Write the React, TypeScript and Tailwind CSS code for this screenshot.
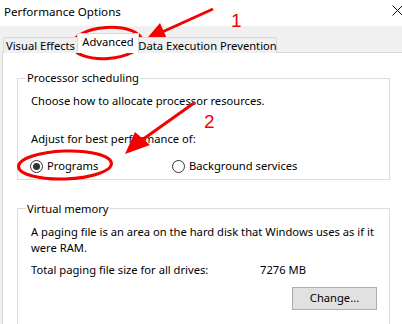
import React from 'react';

// Windows "Performance Options" dialog with red annotations

const Radio = ({ checked, label }: { checked?: boolean; label: string }) => (
  <label className="flex items-center gap-[4px]">
    <span className="w-[13px] h-[13px] rounded-full border border-[#333333] bg-white flex items-center justify-center">
      {checked && <span className="w-[7px] h-[7px] rounded-full bg-[#333333]" />}
    </span>
    <span>{label}</span>
  </label>
);

const Annotations = () => (
  <svg className="absolute inset-0 pointer-events-none" width="402" height="324" viewBox="0 0 402 324">
    <g stroke="#f50000" strokeWidth="3" fill="none">
      <ellipse cx="107" cy="43" rx="35" ry="15.5" transform="rotate(-4 107 43)" />
      <ellipse cx="65" cy="165" rx="46.5" ry="14" transform="rotate(-2 65 165)" />
      <line x1="213" y1="9" x2="160" y2="33" />
      <line x1="194" y1="103" x2="142" y2="140" />
    </g>
    <g fill="#f50000">
      <polygon points="143,43 160,23 168,41" />
      <polygon points="125,154 135,132 150,145" />
      <text x="231" y="27" fontSize="19" fontFamily="'Liberation Sans', sans-serif">1</text>
      <text x="204" y="128" fontSize="19" fontFamily="'Liberation Sans', sans-serif">2</text>
    </g>
  </svg>
);

export default function App() {
  return (
    <div className="relative w-[402px] h-[324px] overflow-hidden bg-white text-[11.2px] text-black font-['Noto_Sans',sans-serif] leading-[16px] whitespace-nowrap">
      {/* Title bar */}
      <div className="h-[26px] flex items-center justify-between pl-[4px]">
        <span className="-mt-[2px] text-[11.6px]">Performance Options</span>
        <svg width="11" height="11" viewBox="0 0 11 11" className="-mr-[1px] -mt-[6px]">
          <path d="M0.5 0.5 L10.5 10.5 M10.5 0.5 L0.5 10.5" stroke="#111" strokeWidth="1" />
        </svg>
      </div>

      {/* Body */}
      <div className="bg-[#f0f0f0] h-[298px] pt-[7px] pl-[2px]">
        {/* Tabs */}
        <div className="flex items-end h-[20px] pl-[1px] relative z-10 -mb-[1px]">
          <div className="h-[16px] w-[75px] border border-b-0 border-[#d9d9d9] bg-[#f0f0f0] flex items-center justify-center">Visual Effects</div>
          <div className="h-[20px] w-[62px] border border-b-0 border-[#d9d9d9] bg-white flex items-center justify-center -ml-[1px] pb-[3px]">Advanced</div>
          <div className="h-[16px] w-[138px] border border-b-0 border-l-0 border-[#d9d9d9] bg-[#f0f0f0] flex items-center justify-center">Data Execution Prevention</div>
        </div>

        {/* Panel */}
        <div className="bg-white border-l border-t border-[#d9d9d9] h-[280px] pl-[14px] pr-[12px] pt-[17px] flex flex-col gap-[21px] w-[420px]">
          <fieldset className="w-[373px] h-[117px] border border-[#dcdcdc] px-[12px]">
            <legend className="-ml-[4px] px-[1px]">Processor scheduling</legend>
            <div className="mt-[7px] pl-[1px]">Choose how to allocate processor resources.</div>
            <div className="mt-[22px] pl-[1px]">Adjust for best performance of:</div>
            <div className="mt-[11px] flex">
              <div className="w-[142px]"><Radio checked label="Programs" /></div>
              <Radio label="Background services" />
            </div>
          </fieldset>

          <fieldset className="w-[373px] h-[140px] border border-[#dcdcdc] px-[12px]">
            <legend className="-ml-[4px] px-[1px]">Virtual memory</legend>
            <div className="mt-[7px] pl-[1px]">
              A paging file is an area on the hard disk that Windows uses as if it
              <br />
              were RAM.
            </div>
            <div className="mt-[6px] flex pl-[1px]">
              <span className="w-[229px]">Total paging file size for all drives:</span>
              <span>7276 MB</span>
            </div>
            <div className="mt-[9px] flex justify-end">
              <button className="w-[85px] h-[23px] bg-[#e1e1e1] border border-[#adadad] flex items-center justify-center">
                Change...
              </button>
            </div>
          </fieldset>
        </div>
      </div>

      <Annotations />
    </div>
  );
}
